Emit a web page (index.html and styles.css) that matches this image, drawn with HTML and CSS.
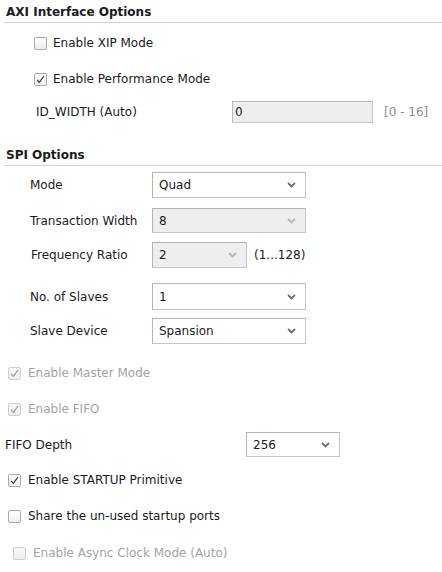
FILE: index.html
```html
<!DOCTYPE html>
<html>
<head>
<meta charset="utf-8">
<link rel="stylesheet" href="styles.css">
</head>
<body>
<div class="page">
  <div class="section-title">AXI Interface Options</div>
  <div class="axi">
    <div class="row chk-row r-xip">
      <span class="cb"></span><span class="cb-label">Enable XIP Mode</span>
    </div>
    <div class="row chk-row r-perf">
      <span class="cb checked"><svg viewBox="0 0 13 13" width="13" height="13"><path d="M3 6.8 L5.4 9.3 L10 3" fill="none" stroke="#333" stroke-width="1.2"/></svg></span><span class="cb-label">Enable Performance Mode</span>
    </div>
    <div class="row r-idw">
      <span class="lbl lbl-idw">ID_WIDTH (Auto)</span>
      <span class="textbox">0</span>
      <span class="hint">[0 - 16]</span>
    </div>
  </div>

  <div class="section-title spi-title">SPI Options</div>
  <div class="spi">
    <div class="row sel-row r-mode">
      <span class="lbl">Mode</span>
      <span class="select">Quad<svg class="chev" viewBox="0 0 9 6" width="9" height="6"><path d="M1 1 L4.5 4.5 L8 1" fill="none" stroke="#6e6e6e" stroke-width="1.8"/></svg></span>
    </div>
    <div class="row sel-row r-tw">
      <span class="lbl">Transaction Width</span>
      <span class="select disabled">8<svg class="chev" viewBox="0 0 9 6" width="9" height="6"><path d="M1 1 L4.5 4.5 L8 1" fill="none" stroke="#b4b4b4" stroke-width="1.8"/></svg></span>
    </div>
    <div class="row sel-row r-fr">
      <span class="lbl lbl-fr">Frequency Ratio</span>
      <span class="select disabled narrow">2<svg class="chev" viewBox="0 0 9 6" width="9" height="6"><path d="M1 1 L4.5 4.5 L8 1" fill="none" stroke="#b4b4b4" stroke-width="1.8"/></svg></span>
      <span class="range">(1...128)</span>
    </div>
    <div class="row sel-row r-ns">
      <span class="lbl">No. of Slaves</span>
      <span class="select">1<svg class="chev" viewBox="0 0 9 6" width="9" height="6"><path d="M1 1 L4.5 4.5 L8 1" fill="none" stroke="#6e6e6e" stroke-width="1.8"/></svg></span>
    </div>
    <div class="row sel-row r-sd">
      <span class="lbl">Slave Device</span>
      <span class="select">Spansion<svg class="chev" viewBox="0 0 9 6" width="9" height="6"><path d="M1 1 L4.5 4.5 L8 1" fill="none" stroke="#6e6e6e" stroke-width="1.8"/></svg></span>
    </div>
  </div>

  <div class="row chk-row outer r-mm disabled-row">
    <span class="cb checked dis"><svg viewBox="0 0 13 13" width="13" height="13"><path d="M3 6.8 L5.4 9.3 L10 3" fill="none" stroke="#9a9a9a" stroke-width="1.2"/></svg></span><span class="cb-label">Enable Master Mode</span>
  </div>
  <div class="row chk-row outer r-fifo disabled-row">
    <span class="cb checked dis"><svg viewBox="0 0 13 13" width="13" height="13"><path d="M3 6.8 L5.4 9.3 L10 3" fill="none" stroke="#9a9a9a" stroke-width="1.2"/></svg></span><span class="cb-label">Enable FIFO</span>
  </div>
  <div class="row sel-row r-fd">
    <span class="lbl lbl-fd">FIFO Depth</span>
    <span class="select short">256<svg class="chev" viewBox="0 0 9 6" width="9" height="6"><path d="M1 1 L4.5 4.5 L8 1" fill="none" stroke="#6e6e6e" stroke-width="1.8"/></svg></span>
  </div>
  <div class="row chk-row outer r-st">
    <span class="cb checked"><svg viewBox="0 0 13 13" width="13" height="13"><path d="M3 6.8 L5.4 9.3 L10 3" fill="none" stroke="#333" stroke-width="1.2"/></svg></span><span class="cb-label">Enable STARTUP Primitive</span>
  </div>
  <div class="row chk-row outer r-sh">
    <span class="cb"></span><span class="cb-label">Share the un-used startup ports</span>
  </div>
  <div class="row chk-row outer inset r-as disabled-row">
    <span class="cb dis"></span><span class="cb-label">Enable Async Clock Mode (Auto)</span>
  </div>
</div>
</body>
</html>
```

FILE: styles.css
```css
html, body {
  margin: 0;
  padding: 0;
  background: #ffffff;
}

body {
  font-family: "DejaVu Sans", sans-serif;
  font-size: 12px;
  color: #1a1a1a;
  width: 442px;
  height: 572px;
  overflow: hidden;
}

.page {
  display: flex;
  flex-direction: column;
}

.section-title {
  font-weight: bold;
  line-height: 16px;
  padding: 4px 0 2px 2px;
  margin-left: 4px;
  border-bottom: 1px solid #cfcfcf;
}

.spi-title {
  margin-top: 20px;
}

.row {
  display: flex;
  align-items: center;
  height: 26px;
}

.chk-row .cb {
  margin-right: 6px;
}

.axi .chk-row {
  padding-left: 34px;
}

.r-xip { margin-top: 7px; }
.r-perf { margin-top: 10px; }
.r-idw { margin-top: 9px; height: 22px; }

.cb {
  box-sizing: border-box;
  width: 13px;
  height: 13px;
  border: 1px solid #a9a9a9;
  border-radius: 2px;
  background: linear-gradient(#ffffff, #eeeeee);
  display: inline-flex;
  flex: none;
  position: relative;
}

.cb svg {
  position: absolute;
  left: -1px;
  top: -1px;
}

.cb.dis {
  border-color: #cdcdcd;
  background: linear-gradient(#f8f8f8, #eeeeee);
}

.outer .cb {
  margin-left: 8px;
  margin-right: 7px;
}

.outer.inset .cb {
  margin-left: 13px;
}

.disabled-row .cb-label {
  color: #a3a3a3;
}

.lbl {
  flex: none;
}

.lbl-idw {
  margin-left: 36px;
  width: 196px;
}

.textbox {
  box-sizing: border-box;
  width: 141px;
  height: 22px;
  background: #eeeeee;
  border: 1px solid #c4c4c4;
  border-top-color: #b8b8b8;
  border-left-color: #b8b8b8;
  padding-left: 2px;
  display: flex;
  align-items: center;
}

.hint {
  margin-left: 11px;
  color: #8c8c8c;
}

.spi .lbl {
  margin-left: 30px;
  width: 122px;
}

.spi .lbl-fr {
  margin-left: 31px;
  width: 121px;
}

.r-mode { margin-top: 6px; }
.r-tw { margin-top: 10px; height: 25px; }
.r-fr { margin-top: 9px; }
.r-ns { margin-top: 15px; height: 27px; }
.r-sd { margin-top: 8px; }

.select {
  box-sizing: border-box;
  width: 154px;
  height: 100%;
  border: 1px solid #c4c4c4;
  border-top-color: #b4b4b4;
  border-left-color: #b4b4b4;
  background: #ffffff;
  display: flex;
  align-items: center;
  padding-left: 6px;
  padding-right: 9px;
  justify-content: space-between;
}

.select.disabled {
  background: #eeeeee;
}

.select.narrow {
  width: 95px;
}

.select.short {
  width: 94px;
}

.chev {
  flex: none;
}

.range {
  margin-left: 7px;
}

.r-mm { margin-top: 16px; }
.r-fifo { margin-top: 10px; }
.r-fd { margin-top: 10px; height: 25px; }
.r-st { margin-top: 10px; }
.r-sh { margin-top: 10px; }
.r-as { margin-top: 11px; }

.lbl-fd {
  margin-left: 5px;
  width: 241px;
}
```
